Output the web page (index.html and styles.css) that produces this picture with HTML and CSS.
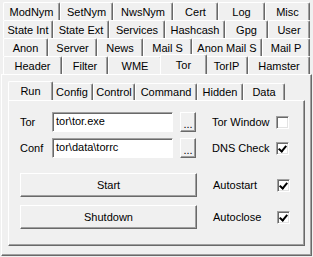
FILE: index.html
```html
<!DOCTYPE html>
<html lang="en">

<head>
    <meta charset="UTF-8">
    <title>Tor</title>
    <link rel="stylesheet" href="styles.css">
</head>

<body>
    <div class="window">
        <div class="tab-rows">
            <div class="tab-row row-1">
                <div class="tab">ModNym</div>
                <div class="tab">SetNym</div>
                <div class="tab">NwsNym</div>
                <div class="tab">Cert</div>
                <div class="tab">Log</div>
                <div class="tab">Misc</div>
            </div>
            <div class="tab-row row-2">
                <div class="tab">State Int</div>
                <div class="tab">State Ext</div>
                <div class="tab">Services</div>
                <div class="tab">Hashcash</div>
                <div class="tab">Gpg</div>
                <div class="tab">User</div>
            </div>
            <div class="tab-row row-3">
                <div class="tab">Anon</div>
                <div class="tab">Server</div>
                <div class="tab">News</div>
                <div class="tab">Mail S</div>
                <div class="tab">Anon Mail S</div>
                <div class="tab">Mail P</div>
            </div>
            <div class="tab-row row-4">
                <div class="tab">Header</div>
                <div class="tab">Filter</div>
                <div class="tab">WME</div>
                <div class="tab active">Tor</div>
                <div class="tab">TorIP</div>
                <div class="tab">Hamster</div>
            </div>
        </div>
        <div class="panel outer-panel">
            <div class="tab-row inner-tabs">
                <div class="tab active">Run</div>
                <div class="tab">Config</div>
                <div class="tab">Control</div>
                <div class="tab">Command</div>
                <div class="tab">Hidden</div>
                <div class="tab">Data</div>
            </div>
            <div class="panel inner-panel">
                <div class="field-row">
                    <span class="label">Tor</span>
                    <div class="textbox">tor\tor.exe</div>
                    <div class="button small">...</div>
                    <span class="check-label">Tor Window</span>
                    <div class="checkbox"></div>
                </div>
                <div class="field-row">
                    <span class="label">Conf</span>
                    <div class="textbox">tor\data\torrc</div>
                    <div class="button small">...</div>
                    <span class="check-label">DNS Check</span>
                    <div class="checkbox checked"></div>
                </div>
                <div class="action-row first">
                    <div class="button wide">Start</div>
                    <span class="check-label">Autostart</span>
                    <div class="checkbox checked"></div>
                </div>
                <div class="action-row">
                    <div class="button wide">Shutdown</div>
                    <span class="check-label">Autoclose</span>
                    <div class="checkbox checked"></div>
                </div>
            </div>
        </div>
    </div>
</body>

</html>
```

FILE: styles.css
```css
* {
    margin: 0;
    padding: 0;
    box-sizing: border-box;
}

body {
    width: 313px;
    height: 257px;
    background-color: #f0f0f0;
    font-family: "Liberation Sans", Arial, sans-serif;
    font-size: 11px;
    color: #000;
    overflow: hidden;
}

.window {
    padding: 2px 1px 0 1px;
}

.tab-rows {
    padding: 0 2px;
}

/* each row of tabs is stretched over the full width, like a win32 multiline tab control */
.tab-row {
    display: grid;
    height: 18px;
}

.row-1 {
    grid-template-columns: 57px 53px 60px 45px 47px 1fr;
}

.row-2 {
    grid-template-columns: 50px 56px 56px 60px 43px 1fr;
}

.row-3 {
    grid-template-columns: 45px 49px 46px 49px 70px 1fr;
}

.row-4 {
    grid-template-columns: 59px 46px 54px 43px 43px 1fr;
}

.tab {
    display: flex;
    justify-content: center;
    align-items: center;
    border-top: 1px solid #fff;
    border-left: 1px solid #fff;
    border-right: 1px solid #696969;
    box-shadow: inset -1px 0 #a0a0a0;
    border-radius: 2px 2px 0 0;
    white-space: nowrap;
}

.tab.active {
    position: relative;
    z-index: 1;
    height: 20px;
    margin: -2px -2px -1px -2px;
    background-color: #f0f0f0;
}

/* 3D frame of a tab page */
.panel {
    border-top: 1px solid #fff;
    border-left: 1px solid #fff;
    border-right: 1px solid #696969;
    border-bottom: 1px solid #696969;
    box-shadow: inset -1px -1px #a0a0a0;
}

.outer-panel {
    height: 182px;
    padding: 8px 6px 0 6px;
}

.inner-tabs {
    height: 17px;
    padding-left: 2px;
    grid-template-columns: 41px 42px 42px 62px 46px 42px;
}

.inner-tabs .tab.active {
    height: 19px;
}

.inner-panel {
    height: 146px;
    padding: 11px 0 0 11px;
}

.field-row {
    display: flex;
    align-items: center;
    height: 20px;
    margin-bottom: 6px;
}

.label {
    width: 32px;
}

.textbox {
    width: 121px;
    height: 20px;
    background-color: #fff;
    border-top: 1px solid #a0a0a0;
    border-left: 1px solid #a0a0a0;
    border-right: 1px solid #fff;
    border-bottom: 1px solid #fff;
    box-shadow: inset 1px 1px #696969;
    padding: 2px 3px;
    white-space: nowrap;
    overflow: hidden;
}

.button {
    display: flex;
    justify-content: center;
    align-items: center;
    border-top: 1px solid #fff;
    border-left: 1px solid #fff;
    border-right: 1px solid #696969;
    border-bottom: 1px solid #696969;
    box-shadow: inset -1px -1px #a0a0a0;
}

.button.small {
    width: 16px;
    height: 20px;
    margin-left: 7px;
    padding-top: 3px;
}

.check-label {
    margin-left: 16px;
    width: 64px;
}

.checkbox {
    width: 13px;
    height: 13px;
    background-color: #fff;
    border-top: 1px solid #a0a0a0;
    border-left: 1px solid #a0a0a0;
    border-right: 1px solid #fff;
    border-bottom: 1px solid #fff;
    box-shadow: inset 1px 1px #696969, inset -1px -1px #e3e3e3;
    position: relative;
}

.checkbox.checked::after {
    content: "";
    position: absolute;
    left: 3px;
    top: 1px;
    width: 3px;
    height: 6px;
    border-right: 2px solid #000;
    border-bottom: 2px solid #000;
    transform: rotate(40deg);
}

.action-row {
    display: flex;
    align-items: center;
    height: 24px;
    margin-bottom: 8px;
}

.action-row.first {
    margin-top: 15px;
}

.button.wide {
    width: 177px;
    height: 24px;
}
```
